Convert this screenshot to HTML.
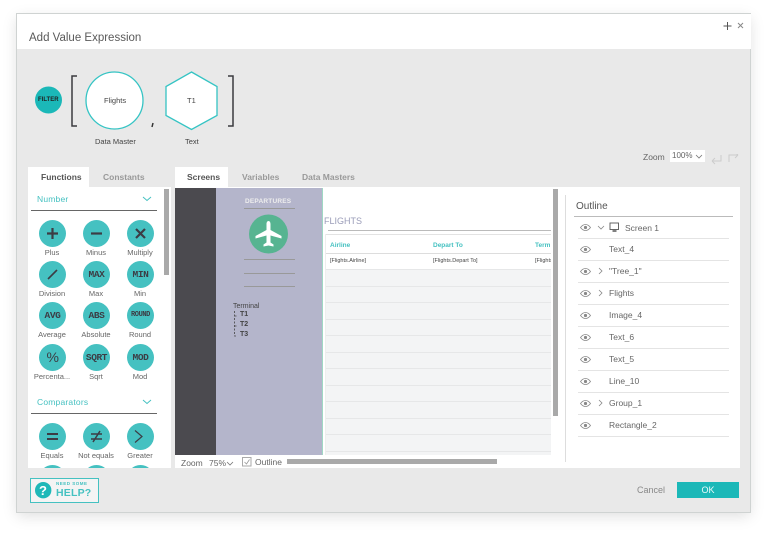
<!DOCTYPE html>
<html><head><meta charset="utf-8">
<style>
html,body{margin:0;padding:0;width:768px;height:533px;overflow:hidden;background:#fff;font-family:"Liberation Sans",sans-serif;color:#555}
#w{position:absolute;left:0;top:0;width:768px;height:533px;filter:blur(.3px)}
.a{position:absolute;white-space:nowrap}
#dlg{position:absolute;left:17px;top:14px;width:733px;height:498px;background:#e9e9e9;box-shadow:0 0 0 1px #cfd3d2,0 4px 14px rgba(0,0,0,.13)}
.c{position:absolute;width:27px;height:27px;border-radius:50%;background:#45c1c1;color:#3c3c44;text-align:center;line-height:27px;font-weight:bold;font-family:"Liberation Mono",monospace;font-size:9.5px;letter-spacing:-.4px}
.l{position:absolute;width:50px;text-align:center;font-size:7.5px;color:#666;white-space:nowrap}
.t{position:absolute;font-size:8.5px;font-weight:bold;color:#999;white-space:nowrap;top:172px}
.rl{position:absolute;left:578px;width:151px;height:1px;background:#e4e4e4}
.ot{position:absolute;left:609px;font-size:8.5px;color:#666;white-space:nowrap}
.tl{position:absolute;left:326px;width:225px;height:1px;background:#e6e7e8}
</style></head><body><div id="w">
<div id="dlg"></div>
<div class="a" style="left:17px;top:14px;width:734px;height:35px;background:#fff"></div>
<div class="a" style="left:29px;top:32px;font-size:11.500px;color:#5a5a5a">Add Value Expression</div>
<svg class="a" style="left:722px;top:20px" width="24" height="12"><path d="M5.500 2v8M1.500 6h8" stroke="#555" stroke-width="1" fill="none"/><path d="M16 3l5 5M21 3l-5 5" stroke="#888" stroke-width="1" fill="none"/></svg>

<svg class="a" style="left:30px;top:65px" width="210" height="72">
<circle cx="18.500" cy="35" r="13.500" fill="#1bb8b8"/>
<path d="M47 11h-5v50h5" fill="none" stroke="#3a3a3f" stroke-width="1.500"/>
<circle cx="84.500" cy="35.500" r="28.500" fill="#fff" stroke="#35c4c4" stroke-width="1.300"/>
<path d="M161.500 7L187 21.500V50.500L161.500 64.500L136 50.500V21.500Z" fill="#fff" stroke="#35c4c4" stroke-width="1.300"/>
<path d="M198 11h5v50h-5" fill="none" stroke="#3a3a3f" stroke-width="1.500"/>
<path d="M123 58l-1 4" stroke="#333" stroke-width="1.500"/>
</svg>
<div class="a" style="left:38px;top:96.500px;font-size:6px;font-weight:bold;color:#222">FILTER</div>
<div class="a" style="left:104px;top:96px;font-size:7.500px;color:#444">Flights</div>
<div class="a" style="left:187px;top:96px;font-size:7.500px;color:#444">T1</div>
<div class="a" style="left:95px;top:136.500px;font-size:7.500px;color:#444">Data Master</div>
<div class="a" style="left:185px;top:136.500px;font-size:7.500px;color:#444">Text</div>

<div class="a" style="left:643px;top:152px;font-size:8.500px;color:#666">Zoom</div>
<div class="a" style="left:670px;top:150px;width:35px;height:12px;background:#fff;font-size:8px;color:#666;line-height:12px;text-indent:2px">100%</div>
<svg class="a" style="left:695px;top:154px;" width="44" height="12"><path d="M1 1l3 3 3-3" stroke="#777" fill="none" stroke-width=".8"/><path d="M17 7h9V1M17 7l3-3M17 7l3 3" stroke="#ccc" fill="none"/><path d="M43 1h-9v7M43 1l-3-3M43 1l-3 3" stroke="#ccc" fill="none"/></svg>

<div class="a" style="left:28px;top:167px;width:61px;height:20px;background:#fff"></div>
<div class="a" style="left:175px;top:167px;width:53px;height:20px;background:#fff"></div>
<div class="t" style="left:41px;color:#555">Functions</div>
<div class="t" style="left:103px">Constants</div>
<div class="t" style="left:187px;color:#555">Screens</div>
<div class="t" style="left:242px">Variables</div>
<div class="t" style="left:302px">Data Masters</div>

<!-- functions panel -->
<div class="a" style="left:28px;top:187px;width:143px;height:281px;background:#fff;overflow:hidden">
<div class="a" style="left:9px;top:7px;font-size:8.500px;color:#45c1c1;letter-spacing:.2px">Number</div>
<svg class="a" style="left:114px;top:9px" width="10" height="6"><path d="M1 1l4 3.500L9 1" stroke="#45c1c1" fill="none"/></svg>
<div class="a" style="left:3px;top:23px;width:126px;height:1px;background:#666"></div>
<div class="a" style="left:136px;top:2px;width:5px;height:86px;background:#a9a9a9"></div>

<div class="c" style="left:11px;top:33px"></div><div class="c" style="left:55px;top:33px"></div><div class="c" style="left:99px;top:33px"></div>
<svg class="a" style="left:11px;top:33px" width="116" height="27"><path d="M13.500 8v11M8 13.500h11" stroke="#3c3c44" stroke-width="2.200"/><path d="M52 13.500h11" stroke="#3c3c44" stroke-width="2.200"/><path d="M97 9l9 9M106 9l-9 9" stroke="#3c3c44" stroke-width="2.200"/></svg>
<div class="l" style="left:-1px;top:61px">Plus</div><div class="l" style="left:43px;top:61px">Minus</div><div class="l" style="left:87px;top:61px">Multiply</div>

<div class="c" style="left:11px;top:74px"><svg style="position:absolute;left:0;top:0" width="27" height="27"><path d="M9 18l9-9" stroke="#3c3c44" stroke-width="1.600"/></svg></div>
<div class="c" style="left:55px;top:74px">MAX</div><div class="c" style="left:99px;top:74px">MIN</div>
<div class="l" style="left:-1px;top:102px">Division</div><div class="l" style="left:43px;top:102px">Max</div><div class="l" style="left:87px;top:102px">Min</div>

<div class="c" style="left:11px;top:115px">AVG</div><div class="c" style="left:55px;top:115px">ABS</div><div class="c" style="left:99px;top:115px;font-size:7px">ROUND</div>
<div class="l" style="left:-1px;top:143px">Average</div><div class="l" style="left:43px;top:143px">Absolute</div><div class="l" style="left:87px;top:143px">Round</div>

<div class="c" style="left:11px;top:157px;font-family:'Liberation Sans',sans-serif;font-weight:normal;font-size:14px">%</div><div class="c" style="left:55px;top:157px">SQRT</div><div class="c" style="left:99px;top:157px">MOD</div>
<div class="l" style="left:-1px;top:185px">Percenta...</div><div class="l" style="left:43px;top:185px">Sqrt</div><div class="l" style="left:87px;top:185px">Mod</div>

<div class="a" style="left:9px;top:210px;font-size:8.500px;color:#45c1c1;letter-spacing:.2px">Comparators</div>
<svg class="a" style="left:114px;top:212px" width="10" height="6"><path d="M1 1l4 3.500L9 1" stroke="#45c1c1" fill="none"/></svg>
<div class="a" style="left:3px;top:226px;width:126px;height:1px;background:#666"></div>

<div class="c" style="left:11px;top:236px"></div><div class="c" style="left:55px;top:236px"></div><div class="c" style="left:99px;top:236px"></div>
<svg class="a" style="left:11px;top:236px" width="116" height="27"><path d="M8 11h11M8 16h11" stroke="#3c3c44" stroke-width="2"/><path d="M52 11h11M52 16h11M61 8l-7 11" stroke="#3c3c44" stroke-width="1.500"/><path d="M96 7.500l7 6-7 6" stroke="#3c3c44" stroke-width="1.200" fill="none"/></svg>
<div class="l" style="left:-1px;top:264px">Equals</div><div class="l" style="left:43px;top:264px">Not equals</div><div class="l" style="left:87px;top:264px">Greater</div>
<div class="c" style="left:11px;top:278px"></div><div class="c" style="left:55px;top:278px"></div><div class="c" style="left:99px;top:278px"></div>
</div>

<!-- main panel -->
<div class="a" style="left:175px;top:187px;width:565px;height:281px;background:#fff"></div>
<div class="a" style="left:175px;top:188px;width:41px;height:267px;background:#4b4a4f"></div>
<div class="a" style="left:216px;top:188px;width:106px;height:267px;background:#b4b5cb"></div>
<div class="a" style="left:322px;top:188px;width:1px;height:267px;background:#9fd8c4"></div>
<div class="a" style="left:245px;top:198px;font-size:6.500px;font-weight:bold;color:#eee;letter-spacing:.2px">DEPARTURES</div>
<div class="a" style="left:244px;top:208px;width:51px;height:1px;background:#999"></div>
<svg class="a" style="left:249px;top:214px" width="40" height="40"><circle cx="19.500" cy="20" r="19.500" fill="#57b491"/><path d="M19.500 7c1.300 0 2 1.500 2 3v6l11 6v2.500l-11-3v7l3 2v2l-5-1-5 1v-2l3-2v-7l-11 3V22l11-6v-6c0-1.500.7-3 2-3z" fill="#fff"/></svg>
<div class="a" style="left:244px;top:259px;width:51px;height:1px;background:#999"></div>
<div class="a" style="left:244px;top:273px;width:51px;height:1px;background:#999"></div>
<div class="a" style="left:244px;top:286px;width:51px;height:1px;background:#999"></div>
<div class="a" style="left:233px;top:303px;font-size:7px;color:#444">Terminal</div>
<div class="a" style="left:240px;top:311px;font-size:7px;font-weight:bold;color:#444">T1</div>
<div class="a" style="left:240px;top:321px;font-size:7px;font-weight:bold;color:#444">T2</div>
<div class="a" style="left:240px;top:331px;font-size:7px;font-weight:bold;color:#444">T3</div>
<svg class="a" style="left:233px;top:310px" width="8" height="28"><path d="M1.500 1v25h3M1.500 6h3M1.500 16h3" stroke="#444" stroke-width=".8" stroke-dasharray="2 1.500" fill="none"/></svg>

<div class="a" style="left:324px;top:216px;font-size:9px;color:#9a9cb8">FLIGHTS</div>
<div class="a" style="left:328px;top:230px;width:223px;height:1px;background:#bbb"></div>
<div class="a" style="left:325px;top:234px;width:226px;height:1px;background:#e3e3e3"></div>
<div class="a" style="left:325px;top:253px;width:226px;height:1px;background:#ddd"></div>
<div class="a" style="left:325px;top:234px;width:1px;height:221px;background:#eee"></div>
<div class="a" style="left:330px;top:242px;font-size:6.500px;font-weight:bold;color:#45c1c1">Airline</div>
<div class="a" style="left:433px;top:242px;font-size:6.500px;font-weight:bold;color:#45c1c1">Depart To</div>
<div class="a" style="left:535px;top:242px;font-size:6.500px;font-weight:bold;color:#45c1c1;width:16px;overflow:hidden">Term</div>
<div class="a" style="left:330px;top:258px;font-size:5.500px;color:#444">[Flights.Airline]</div>
<div class="a" style="left:433px;top:258px;font-size:5.500px;color:#444">[Flights.Depart To]</div>
<div class="a" style="left:535px;top:258px;font-size:5.500px;color:#444;width:16px;overflow:hidden">[Flights</div>
<div class="a" style="left:326px;top:270px;width:225px;height:185px;background:#f3f4f5"></div>
<div class="tl" style="top:269px"></div><div class="tl" style="top:286px"></div><div class="tl" style="top:302px"></div><div class="tl" style="top:319px"></div><div class="tl" style="top:335px"></div><div class="tl" style="top:352px"></div><div class="tl" style="top:368px"></div><div class="tl" style="top:385px"></div><div class="tl" style="top:401px"></div><div class="tl" style="top:418px"></div><div class="tl" style="top:434px"></div><div class="tl" style="top:451px"></div>

<div class="a" style="left:553px;top:189px;width:5px;height:227px;background:#a9a9a9"></div>
<div class="a" style="left:181px;top:458px;font-size:8.500px;color:#666">Zoom</div>
<div class="a" style="left:209px;top:458px;font-size:8.500px;color:#666">75%</div>
<svg class="a" style="left:226px;top:461px" width="8" height="5"><path d="M1 1l3 3 3-3" stroke="#777" fill="none" stroke-width=".8"/></svg>
<svg class="a" style="left:242px;top:457px" width="10" height="10"><rect x=".5" y=".5" width="8.500" height="8.500" fill="#fff" stroke="#aaa"/><path d="M2.500 5l2 2 3-4.500" stroke="#999" fill="none" stroke-width=".8"/></svg>
<div class="a" style="left:255px;top:457px;font-size:8.500px;color:#666">Outline</div>
<div class="a" style="left:287px;top:459px;width:210px;height:5px;background:#a9a9a9"></div>

<!-- outline -->
<div class="a" style="left:565px;top:195px;width:1px;height:267px;background:#ddd"></div>
<div class="a" style="left:576px;top:201px;font-size:10px;color:#555">Outline</div>
<div class="a" style="left:574px;top:216px;width:159px;height:1px;background:#bbb"></div>
<div class="rl" style="top:238px"></div><div class="rl" style="top:260px"></div><div class="rl" style="top:282px"></div><div class="rl" style="top:304px"></div><div class="rl" style="top:326px"></div><div class="rl" style="top:348px"></div><div class="rl" style="top:370px"></div><div class="rl" style="top:392px"></div><div class="rl" style="top:414px"></div><div class="rl" style="top:436px"></div>
<svg class="a" style="left:578px;top:220px" width="30" height="215" fill="none" stroke="#888" stroke-width=".8">
<g id="ey"><path d="M2.500 7.500c3-4 7-4 10 0-3 4-7 4-10 0z"/><circle cx="7.500" cy="7.500" r="1.200" fill="#888"/></g>
<use href="#ey" y="22"/><use href="#ey" y="44"/><use href="#ey" y="66"/><use href="#ey" y="88"/><use href="#ey" y="110"/><use href="#ey" y="132"/><use href="#ey" y="154"/><use href="#ey" y="176"/><use href="#ey" y="198"/>
<path d="M20 6l3 3 3-3"/><path d="M21 48l3 3-3 3M21 70l3 3-3 3M21 180l3 3-3 3"/>
</svg>
<svg class="a" style="left:609px;top:222px" width="11" height="11" fill="none" stroke="#555" stroke-width=".9"><rect x="1" y="1" width="8.500" height="6.500"/><path d="M3.500 9h4" stroke-width="1.500"/></svg>
<div class="ot" style="left:625px;top:223px">Screen 1</div>
<div class="ot" style="top:244px">Text_4</div>
<div class="ot" style="top:266px">"Tree_1"</div>
<div class="ot" style="top:288px">Flights</div>
<div class="ot" style="top:310px">Image_4</div>
<div class="ot" style="top:332px">Text_6</div>
<div class="ot" style="top:354px">Text_5</div>
<div class="ot" style="top:376px">Line_10</div>
<div class="ot" style="top:398px">Group_1</div>
<div class="ot" style="top:420px">Rectangle_2</div>

<!-- footer -->
<div class="a" style="left:30px;top:478px;width:67px;height:23px;border:1px solid #45c1c1;background:#f4f4f4"></div>
<svg class="a" style="left:35px;top:482px" width="17" height="17"><circle cx="8.200" cy="8.200" r="8.200" fill="#1fb8b8"/></svg>
<div class="a" style="left:39px;top:482px;font-size:13px;font-weight:bold;color:#fff;line-height:17px">?</div>
<div class="a" style="left:56px;top:481px;font-size:4.500px;font-weight:bold;color:#45c1c1;letter-spacing:.5px">NEED SOME</div>
<div class="a" style="left:56px;top:487px;font-size:10.500px;font-weight:bold;color:#45c1c1;letter-spacing:.2px">HELP?</div>
<div class="a" style="left:637px;top:485px;font-size:9px;color:#888">Cancel</div>
<div class="a" style="left:677px;top:482px;width:62px;height:16px;background:#1bb8b8;color:#e8fafa;font-size:9px;text-align:center;line-height:16px">OK</div>
</div></body></html>
